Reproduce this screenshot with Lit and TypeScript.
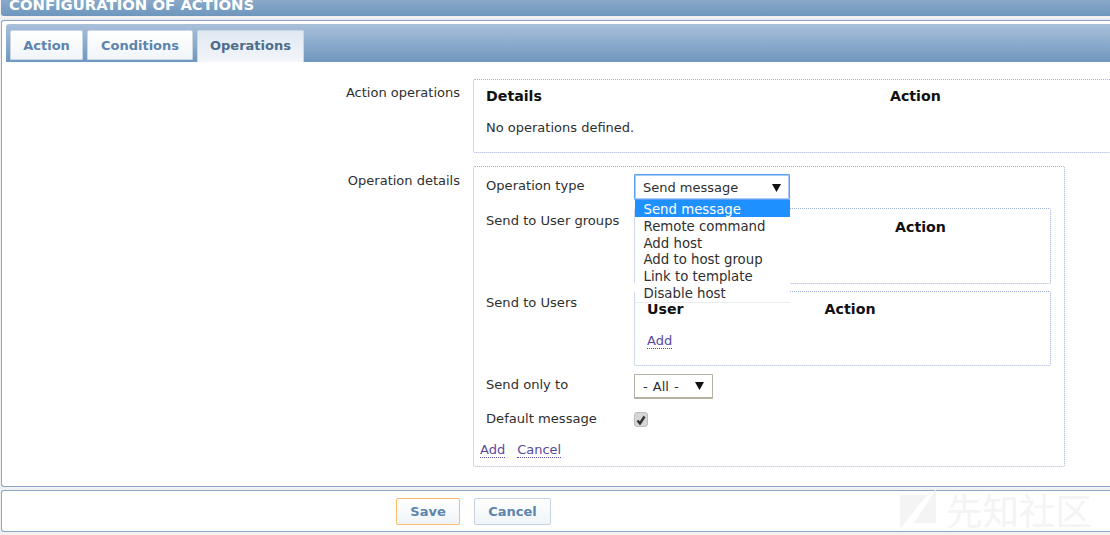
import { css, html, LitElement } from "lit";
import { customElement } from "lit/decorators.js";

const ARROW = html`<svg class="arrow" width="9" height="8" viewBox="0 0 9 8"><polygon points="0,0 9,0 4.5,8" fill="#111" /></svg>`;

@customElement("app-root")
export class AppRoot extends LitElement {
  private options = ["Send message", "Remote command", "Add host", "Add to host group", "Link to template", "Disable host"];

  render() {
    return html`
      <div class="title">CONFIGURATION OF ACTIONS</div>
      <div class="panel">
        <div class="tabbar">
          <div class="tab">Action</div>
          <div class="tab conditions">Conditions</div>
          <div class="tab active">Operations</div>
        </div>
        <div class="form-row first">
          <div class="label">Action operations</div>
          <div class="box ops">
            <div class="heads"><b>Details</b><b class="ops-action">Action</b></div>
            <div class="empty">No operations defined.</div>
          </div>
        </div>
        <div class="form-row second">
          <div class="label">Operation details</div>
          <div class="box details">
            <div class="line type-line">
              <span>Operation type</span>
              <div class="select open"><span>Send message</span>${ARROW}</div>
              <div class="menu">
                ${this.options.map((o, i) => html`<div class="option ${i === 0 ? "selected" : ""}">${o}</div>`)}
              </div>
            </div>
            <div class="line groups-line">
              <span>Send to User groups</span>
              <div class="box inner groups"><b class="groups-action">Action</b></div>
            </div>
            <div class="line users-line">
              <span>Send to Users</span>
              <div class="box inner users">
                <div class="heads"><b>User</b><b class="users-action">Action</b></div>
                <a class="link users-add">Add</a>
              </div>
            </div>
            <div class="line only-line">
              <span>Send only to</span>
              <div class="select small"><span>- All -</span>${ARROW}</div>
            </div>
            <div class="line default-line">
              <span>Default message</span>
              <div class="check">
                <svg width="10" height="10" viewBox="0 0 10 10"><path d="M1.5 5.5 L4 8.5 L8.5 1.5" fill="none" stroke="#333" stroke-width="2.4" /></svg>
              </div>
            </div>
            <div class="actions"><a class="link">Add</a><a class="link">Cancel</a></div>
          </div>
        </div>
      </div>
      <div class="footer">
        <div class="btn save">Save</div>
        <div class="btn">Cancel</div>
        <div class="watermark">
          <svg width="38" height="42" viewBox="0 0 38 42"><polygon points="0,6 27,6 0,40" fill="#f4f4f4" /><polygon points="36,0 36,34 14,34" fill="#f4f4f4" /></svg>
          <span>先知社区</span>
        </div>
      </div>
    `;
  }

  static styles = css`
    :host {
      display: block;
      width: 1110px;
      height: 535px;
      overflow: hidden;
      background: #f1f1f1;
      font-family: "DejaVu Sans", Verdana, sans-serif;
      font-size: 13px;
      color: #2f2f2f;
      position: relative;
    }

    .title {
      height: 16px;
      margin-left: 1px;
      padding-left: 8px;
      line-height: 10px;
      background: linear-gradient(#8aa9c9, #6e96bd);
      color: #fff;
      font-weight: bold;
      font-size: 14.85px;
      border-radius: 0 0 0 3px;
      overflow: hidden;
    }

    .panel {
      height: 467px;
      margin: 4px 0 0 1px;
      background: #fff;
      border: 1px solid #8ba8c6;
      border-right: none;
      padding-top: 3px;
      box-sizing: border-box;
      border-radius: 3px 0 0 3px;
      box-shadow: 0 -1px 0 #dfe6ee;
    }

    .tabbar {
      margin-left: 4px;
      height: 38px;
      box-sizing: border-box;
      padding: 6px 0 0 4px;
      display: flex;
      gap: 4px;
      background: linear-gradient(#a9c0d9, #6f97bf);
      border-radius: 3px 0 0 0;
    }

    .tab {
      width: 73px;
      height: 30px;
      box-sizing: border-box;
      text-align: center;
      line-height: 29px;
      font-weight: bold;
      font-size: 13px;
      color: #5a84ae;
      background: linear-gradient(#ffffff, #f1f5f9);
      border: 1px solid #c9d7e5;
      border-radius: 2px 2px 0 0;
    }

    .tab.conditions {
      width: 106px;
    }

    .tab.active {
      width: 107px;
      height: 32px;
      color: #4d6c8c;
      background: linear-gradient(#dfe8f1, #f3f6fa);
      border-bottom: none;
    }

    .form-row {
      display: flex;
      align-items: flex-start;
      gap: 13px;
    }

    .form-row.first {
      margin-top: 17px;
    }

    .form-row.second {
      margin-top: 13px;
    }

    .label {
      width: 458px;
      flex: none;
      text-align: right;
      padding-top: 5px;
      line-height: 17px;
    }

    .second .label {
      padding-top: 6px;
    }

    .box {
      border: 1px dotted #9fb1da;
      box-sizing: border-box;
      border-radius: 2px;
      background: #fff;
    }

    .ops {
      width: 700px;
      height: 74px;
      flex: none;
      padding: 8px 12px;
    }

    .heads {
      display: flex;
      font-size: 14.2px;
      color: #111;
      line-height: 17px;
    }

    .ops-action {
      margin-left: 348px;
    }

    .empty {
      margin-top: 14px;
      line-height: 17px;
    }

    .details {
      width: 592px;
      height: 301px;
      flex: none;
      padding: 7px 12px 0;
    }

    .line {
      display: grid;
      grid-template-columns: 148px 1fr;
      align-items: start;
      position: relative;
    }

    .line > span {
      line-height: 17px;
      font-size: 13.1px;
    }

    .type-line > span {
      padding-top: 3px;
    }

    .select {
      box-sizing: border-box;
      height: 25px;
      width: 79px;
      border: 1px solid #b5b2a3;
      border-bottom-width: 2px;
      border-radius: 1px;
      background: #fff;
      display: flex;
      align-items: center;
      justify-content: space-between;
      padding: 0 8px;
      line-height: 17px;
      word-spacing: 1px;
    }

    .select.open {
      width: 156px;
      height: 26px;
      border: 1px solid #5b9ef2;
      box-shadow: inset 0 0 0 1px #a9cbf6;
      padding: 1px 8px 0;
      word-spacing: 0;
    }

    .arrow {
      flex: none;
    }

    .menu {
      position: absolute;
      left: 149px;
      top: 26px;
      width: 155px;
      height: 102px;
      background: #fff;
      z-index: 2;
      box-shadow: 0 1px 0 #ececec;
      overflow: hidden;
      font-size: 13.3px;
    }

    .option {
      height: 16.8px;
      line-height: 20.4px;
      padding-left: 8.5px;
    }

    .option.selected {
      background: #1e90ff;
      color: #fff;
    }

    .groups-line {
      margin-top: 8px;
    }

    .groups-line > span {
      padding-top: 4px;
    }

    .inner {
      width: 417px;
    }

    .groups {
      height: 76px;
      padding: 10px 0 0 260px;
      font-size: 14.2px;
      line-height: 17px;
      color: #111;
    }

    .users-line {
      margin-top: 7px;
    }

    .users-line > span {
      padding-top: 3px;
    }

    .users {
      height: 75px;
      padding: 9px 12px 0;
    }

    .users-action {
      margin-left: 141px;
    }

    .users-add {
      display: inline-block;
      margin-top: 15px;
    }

    .link {
      color: #58499c;
      line-height: 15px;
      border-bottom: 1px dotted #58499c;
    }

    .only-line {
      margin-top: 8px;
    }

    .only-line > span {
      padding-top: 2px;
    }

    .default-line {
      margin-top: 11px;
      align-items: center;
    }

    .check {
      width: 14px;
      height: 15px;
      box-sizing: border-box;
      margin-top: 2px;
      background: #d6d6d6;
      border: 1px solid #bdbdbd;
      border-radius: 3px;
      display: flex;
      align-items: center;
      justify-content: center;
    }

    .actions {
      display: flex;
      gap: 12px;
      margin: 15px 0 0 -6px;
    }

    .footer {
      height: 42px;
      margin: 3px 0 0 1px;
      box-sizing: border-box;
      background: #fff;
      border: 1px solid #8ba8c6;
      border-right: none;
      border-radius: 3px 0 0 3px;
      display: flex;
      align-items: center;
      gap: 14px;
      padding-left: 394px;
      position: relative;
    }

    .btn {
      width: 64px;
      height: 27px;
      box-sizing: border-box;
      text-align: center;
      line-height: 25px;
      font-weight: bold;
      font-size: 13px;
      color: #5d85ad;
      background: linear-gradient(#ffffff, #f0f4f8);
      border: 1px solid #c5d3e2;
      border-radius: 2px;
    }

    .btn + .btn {
      width: 77px;
    }

    .btn.save {
      border-color: #f7bd6b;
    }

    .watermark {
      position: absolute;
      left: 898px;
      top: -4px;
      display: flex;
      align-items: center;
      gap: 8px;
      color: #f4f4f4;
      font-family: "Noto Sans CJK SC", sans-serif;
      font-size: 36.5px;
      line-height: 46px;
      pointer-events: none;
    }
  `;
}
